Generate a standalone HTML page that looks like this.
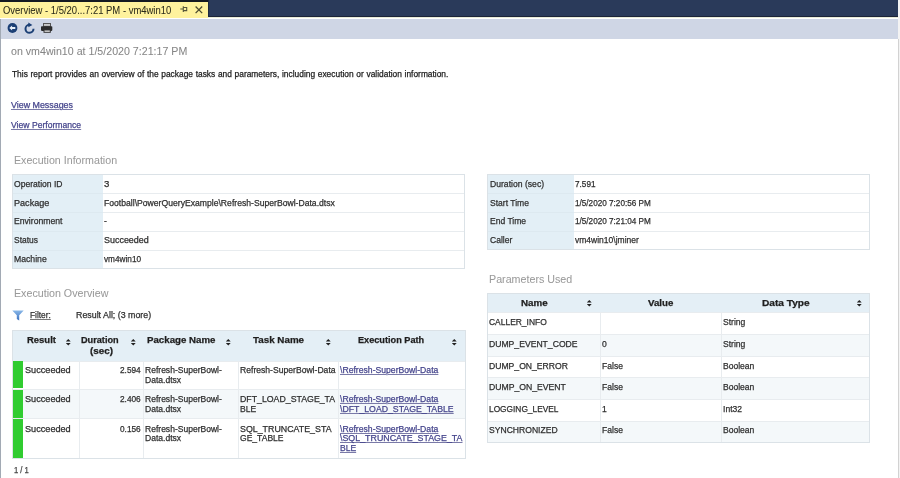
<!DOCTYPE html>
<html><head><meta charset="utf-8"><style>
html,body{margin:0;padding:0;width:900px;height:478px;overflow:hidden;background:#fff;position:relative;font-family:"Liberation Sans", sans-serif;}
#t{position:absolute;left:0;top:0;width:900px;height:478px;will-change:transform;}
#t div{position:absolute;white-space:pre;transform-origin:0 0;-webkit-text-stroke:0.25px currentColor;}
</style></head><body>
<div style="position:absolute;left:0px;top:0px;width:898px;height:16.7px;background:#2a3a5a;"></div>
<div style="position:absolute;left:207.8px;top:15.7px;width:690.2px;height:1.0px;background:#1c2438;"></div>
<div style="position:absolute;left:207.8px;top:0px;width:1.0px;height:16.7px;background:#1f2a40;"></div>
<div style="position:absolute;left:0px;top:0px;width:208px;height:1.6px;background:#151a22;"></div>
<div style="position:absolute;left:207.8px;top:16.7px;width:690.2px;height:1.8px;background:#e8ebd8;"></div>
<div style="position:absolute;left:0px;top:1.6px;width:207.8px;height:16.9px;background:#fff29d;"></div>
<div style="position:absolute;left:0px;top:18.5px;width:898px;height:20.1px;background:#cfd6e5;"></div>
<div style="position:absolute;left:0px;top:18.5px;width:1.4px;height:459.5px;background:#a2aab4;"></div>
<div style="position:absolute;left:898px;top:0px;width:2px;height:478px;background:#f3f3f3;"></div>
<div style="position:absolute;left:898px;top:38.6px;width:1px;height:439.4px;background:#d2d2d2;"></div>
<div style="position:absolute;left:12px;top:174px;width:453px;height:95px;background:#fff;box-sizing:border-box;border:1px solid #dbe2e7"></div>
<div style="position:absolute;left:13px;top:175px;width:89.5px;height:93px;background:#e3eff6;"></div>
<div style="position:absolute;left:102.5px;top:192.7px;width:361.5px;height:1.0px;background:#e8ecef;"></div>
<div style="position:absolute;left:13px;top:192.7px;width:89.5px;height:1.0px;background:#dde9f0;"></div>
<div style="position:absolute;left:102.5px;top:212px;width:361.5px;height:1px;background:#e8ecef;"></div>
<div style="position:absolute;left:13px;top:212px;width:89.5px;height:1px;background:#dde9f0;"></div>
<div style="position:absolute;left:102.5px;top:231px;width:361.5px;height:1px;background:#e8ecef;"></div>
<div style="position:absolute;left:13px;top:231px;width:89.5px;height:1px;background:#dde9f0;"></div>
<div style="position:absolute;left:102.5px;top:249.7px;width:361.5px;height:1.0px;background:#e8ecef;"></div>
<div style="position:absolute;left:13px;top:249.7px;width:89.5px;height:1.0px;background:#dde9f0;"></div>
<div style="position:absolute;left:487px;top:174px;width:383px;height:76px;background:#fff;box-sizing:border-box;border:1px solid #dbe2e7"></div>
<div style="position:absolute;left:488px;top:175px;width:85.6px;height:74px;background:#e3eff6;"></div>
<div style="position:absolute;left:573.6px;top:192.7px;width:295.4px;height:1.0px;background:#e8ecef;"></div>
<div style="position:absolute;left:488px;top:192.7px;width:85.6px;height:1.0px;background:#dde9f0;"></div>
<div style="position:absolute;left:573.6px;top:212px;width:295.4px;height:1px;background:#e8ecef;"></div>
<div style="position:absolute;left:488px;top:212px;width:85.6px;height:1px;background:#dde9f0;"></div>
<div style="position:absolute;left:573.6px;top:231px;width:295.4px;height:1px;background:#e8ecef;"></div>
<div style="position:absolute;left:488px;top:231px;width:85.6px;height:1px;background:#dde9f0;"></div>
<div style="position:absolute;left:12px;top:330.1px;width:453.5px;height:128.9px;background:#fff;box-sizing:border-box;border:1px solid #dbe2e7"></div>
<div style="position:absolute;left:13px;top:331.1px;width:451.5px;height:29.5px;background:#e4eff6;"></div>
<div style="position:absolute;left:13px;top:388.8px;width:451.5px;height:29.3px;background:#f4f8fa;"></div>
<div style="position:absolute;left:13px;top:360.6px;width:451.5px;height:1.0px;background:#e8ecef;"></div>
<div style="position:absolute;left:13px;top:388.8px;width:451.5px;height:1.0px;background:#e8ecef;"></div>
<div style="position:absolute;left:13px;top:418.1px;width:451.5px;height:1.0px;background:#e8ecef;"></div>
<div style="position:absolute;left:79px;top:360.6px;width:1px;height:97.4px;background:#e8ecef;"></div>
<div style="position:absolute;left:143.3px;top:360.6px;width:1.0px;height:97.4px;background:#e8ecef;"></div>
<div style="position:absolute;left:238.2px;top:360.6px;width:1.0px;height:97.4px;background:#e8ecef;"></div>
<div style="position:absolute;left:338.4px;top:360.6px;width:1.0px;height:97.4px;background:#e8ecef;"></div>
<div style="position:absolute;left:12.9px;top:361.1px;width:9.9px;height:27.4px;background:#30cc30;"></div>
<div style="position:absolute;left:12.9px;top:389.5px;width:9.9px;height:28.3px;background:#30cc30;"></div>
<div style="position:absolute;left:12.9px;top:418.8px;width:9.9px;height:39.2px;background:#30cc30;"></div>
<div style="position:absolute;left:487px;top:293.2px;width:383px;height:149.8px;background:#fff;box-sizing:border-box;border:1px solid #dbe2e7"></div>
<div style="position:absolute;left:488px;top:294.2px;width:381px;height:18.0px;background:#e4eff6;"></div>
<div style="position:absolute;left:488px;top:312.2px;width:381px;height:1.0px;background:#e8ecef;"></div>
<div style="position:absolute;left:488px;top:333.95px;width:381px;height:21.75px;background:#f4f8fa;"></div>
<div style="position:absolute;left:488px;top:333.95px;width:381px;height:1.0px;background:#e8ecef;"></div>
<div style="position:absolute;left:488px;top:355.7px;width:381px;height:1.0px;background:#e8ecef;"></div>
<div style="position:absolute;left:488px;top:377.45px;width:381px;height:21.75px;background:#f4f8fa;"></div>
<div style="position:absolute;left:488px;top:377.45px;width:381px;height:1.0px;background:#e8ecef;"></div>
<div style="position:absolute;left:488px;top:399.2px;width:381px;height:1.0px;background:#e8ecef;"></div>
<div style="position:absolute;left:488px;top:420.95px;width:381px;height:21.05px;background:#f4f8fa;"></div>
<div style="position:absolute;left:488px;top:420.95px;width:381px;height:1.0px;background:#e8ecef;"></div>
<div style="position:absolute;left:600.3px;top:312.2px;width:1.0px;height:129.8px;background:#e8ecef;"></div>
<div style="position:absolute;left:721.4px;top:312.2px;width:1.0px;height:129.8px;background:#e8ecef;"></div>
<svg style="position:absolute;left:66.2px;top:338.7px" width="5" height="7" viewBox="0 0 5 7"><path d="M2.3 0 L4.7 2.4 L-0.1 2.4 Z M2.3 6.5 L4.7 4.1 L-0.1 4.1 Z" fill="#222"/></svg>
<svg style="position:absolute;left:130.7px;top:338.7px" width="5" height="7" viewBox="0 0 5 7"><path d="M2.3 0 L4.7 2.4 L-0.1 2.4 Z M2.3 6.5 L4.7 4.1 L-0.1 4.1 Z" fill="#222"/></svg>
<svg style="position:absolute;left:225.9px;top:338.7px" width="5" height="7" viewBox="0 0 5 7"><path d="M2.3 0 L4.7 2.4 L-0.1 2.4 Z M2.3 6.5 L4.7 4.1 L-0.1 4.1 Z" fill="#222"/></svg>
<svg style="position:absolute;left:325.6px;top:338.7px" width="5" height="7" viewBox="0 0 5 7"><path d="M2.3 0 L4.7 2.4 L-0.1 2.4 Z M2.3 6.5 L4.7 4.1 L-0.1 4.1 Z" fill="#222"/></svg>
<svg style="position:absolute;left:451.6px;top:338.7px" width="5" height="7" viewBox="0 0 5 7"><path d="M2.3 0 L4.7 2.4 L-0.1 2.4 Z M2.3 6.5 L4.7 4.1 L-0.1 4.1 Z" fill="#222"/></svg>
<svg style="position:absolute;left:587.4px;top:299.7px" width="5" height="7" viewBox="0 0 5 7"><path d="M2.3 0 L4.7 2.4 L-0.1 2.4 Z M2.3 6.5 L4.7 4.1 L-0.1 4.1 Z" fill="#222"/></svg>
<svg style="position:absolute;left:856.5px;top:299.7px" width="5" height="7" viewBox="0 0 5 7"><path d="M2.3 0 L4.7 2.4 L-0.1 2.4 Z M2.3 6.5 L4.7 4.1 L-0.1 4.1 Z" fill="#222"/></svg>
<svg style="position:absolute;left:12px;top:309.5px" width="12" height="11" viewBox="0 0 12 11"><defs><linearGradient id="fg" x1="0" y1="0" x2="0" y2="1"><stop offset="0" stop-color="#8ab8e8"/><stop offset="1" stop-color="#3a70c0"/></linearGradient></defs><path d="M0.3 0.5 H11.7 L7.2 5.2 V10.5 L4.8 9 V5.2 Z" fill="url(#fg)"/></svg>
<svg style="position:absolute;left:0px;top:19px" width="60" height="19" viewBox="0 0 60 19">
<circle cx="12.45" cy="9" r="4.9" fill="#1b3f75"/>
<path d="M9.3 9 L12.1 6.4 V8.1 H15.3 V9.9 H12.1 V11.6 Z" fill="#e8f0fa"/>
<path d="M33.5 9.8 A4 4 0 1 1 29.3 5.8" fill="none" stroke="#1b3f75" stroke-width="2"/>
<path d="M28.3 3.6 L32.4 5.9 L28.3 8.2 Z" fill="#1b3f75"/>
<rect x="43" y="4" width="8" height="4" fill="#555"/>
<rect x="44" y="5.2" width="6" height="1.5" fill="#e6e6e6"/>
<rect x="41" y="7.3" width="11.3" height="4.6" rx="0.8" fill="#2b2b2b"/>
<rect x="43.5" y="10.5" width="7.3" height="3.3" fill="#333"/>
<rect x="44.5" y="11.5" width="5.3" height="1.3" fill="#e6e6e6"/>
</svg>
<svg style="position:absolute;left:175px;top:2px" width="32" height="14" viewBox="0 0 32 14">
<path d="M5.3 7 H8.3 M8.3 4.3 V10.1 M8.3 5.5 H11.7 V8.6 H8.3" fill="none" stroke="#55553a" stroke-width="1.1"/>
<path d="M20.6 4.5 L27.2 11.1 M27.2 4.5 L20.6 11.1" stroke="#4a4a30" stroke-width="1.3"/>
</svg>
<div id="t">
<div style="-webkit-text-stroke:0.05px;left:2.93px;top:5.12px;font-size:11px;line-height:11px;color:#2a2a1a;transform:scaleX(0.8600);">Overview - 1/5/20...7:21 PM - vm4win10</div>
<div style="-webkit-text-stroke:0.05px;left:11.03px;top:45.92px;font-size:11px;line-height:11px;color:#858585;transform:scaleX(0.9672);">on vm4win10 at 1/5/2020 7:21:17 PM</div>
<div style="left:12.37px;top:70.08px;font-size:9px;line-height:9px;word-spacing:0.4px;color:#1a1a1a;transform:scaleX(0.9309);">This report provides an overview of the package tasks and parameters, including execution or validation information.</div>
<div style="left:11.37px;top:100.88px;font-size:9px;line-height:9px;color:#45458c;transform:scaleX(0.9859);text-decoration:underline;text-decoration-color:#7a7aa8;">View Messages</div>
<div style="left:11.37px;top:121.08px;font-size:9px;line-height:9px;color:#45458c;transform:scaleX(0.9562);text-decoration:underline;text-decoration-color:#7a7aa8;">View Performance</div>
<div style="-webkit-text-stroke:0.05px;left:13.93px;top:154.72px;font-size:11px;line-height:11px;color:#9a9a9a;transform:scaleX(0.9687);">Execution Information</div>
<div style="-webkit-text-stroke:0.05px;left:489.23px;top:274.22px;font-size:11px;line-height:11px;color:#9a9a9a;transform:scaleX(0.9729);">Parameters Used</div>
<div style="-webkit-text-stroke:0.05px;left:13.93px;top:287.62px;font-size:11px;line-height:11px;color:#9a9a9a;transform:scaleX(0.9707);">Execution Overview</div>
<div style="left:13.77px;top:179.68px;font-size:9px;line-height:9px;color:#2e2e2e;transform:scaleX(0.9515);">Operation ID</div>
<div style="left:103.97px;top:179.68px;font-size:9px;line-height:9px;color:#2e2e2e;transform:scaleX(1.0691);">3</div>
<div style="left:13.77px;top:198.78px;font-size:9px;line-height:9px;color:#2e2e2e;transform:scaleX(1.0079);">Package</div>
<div style="left:103.97px;top:198.78px;font-size:9px;line-height:9px;color:#2e2e2e;transform:scaleX(0.9575);">Football\PowerQueryExample\Refresh-SuperBowl-Data.dtsx</div>
<div style="left:13.77px;top:217.38px;font-size:9px;line-height:9px;color:#2e2e2e;transform:scaleX(0.9591);">Environment</div>
<div style="left:103.97px;top:217.38px;font-size:9px;line-height:9px;color:#2e2e2e;transform:scaleX(0.9500);">-</div>
<div style="left:13.77px;top:236.28px;font-size:9px;line-height:9px;color:#2e2e2e;transform:scaleX(0.9384);">Status</div>
<div style="left:103.97px;top:236.28px;font-size:9px;line-height:9px;color:#2e2e2e;transform:scaleX(0.9944);">Succeeded</div>
<div style="left:13.77px;top:254.58px;font-size:9px;line-height:9px;color:#2e2e2e;transform:scaleX(0.9628);">Machine</div>
<div style="left:103.97px;top:254.58px;font-size:9px;line-height:9px;color:#2e2e2e;transform:scaleX(0.9159);">vm4win10</div>
<div style="left:489.57px;top:179.68px;font-size:9px;line-height:9px;color:#2e2e2e;transform:scaleX(0.9563);">Duration (sec)</div>
<div style="left:574.67px;top:179.68px;font-size:9px;line-height:9px;color:#2e2e2e;transform:scaleX(0.9100);">7.591</div>
<div style="left:489.57px;top:198.78px;font-size:9px;line-height:9px;color:#2e2e2e;transform:scaleX(0.9500);">Start Time</div>
<div style="left:574.67px;top:198.78px;font-size:9px;line-height:9px;color:#2e2e2e;transform:scaleX(0.9073);">1/5/2020 7:20:56 PM</div>
<div style="left:489.57px;top:217.38px;font-size:9px;line-height:9px;color:#2e2e2e;transform:scaleX(0.9500);">End Time</div>
<div style="left:574.67px;top:217.38px;font-size:9px;line-height:9px;color:#2e2e2e;transform:scaleX(0.9073);">1/5/2020 7:21:04 PM</div>
<div style="left:489.57px;top:236.28px;font-size:9px;line-height:9px;color:#2e2e2e;transform:scaleX(0.9500);">Caller</div>
<div style="left:574.67px;top:236.28px;font-size:9px;line-height:9px;color:#2e2e2e;transform:scaleX(0.9455);">vm4win10\jminer</div>
<div style="left:30.37px;top:311.18px;font-size:9px;line-height:9px;color:#333;transform:scaleX(0.9259);text-decoration:underline;text-decoration-color:#777;">Filter:</div>
<div style="left:76.07px;top:311.18px;font-size:9px;line-height:9px;color:#2e2e2e;transform:scaleX(0.9824);">Result All; (3 more)</div>
<div style="left:26.67px;top:336.08px;font-size:9px;line-height:9px;font-weight:700;color:#1e1e1e;transform:scaleX(1.0520);">Result</div>
<div style="left:80.67px;top:336.08px;font-size:9px;line-height:9px;font-weight:700;color:#1e1e1e;transform:scaleX(1.0166);">Duration</div>
<div style="left:90.07px;top:346.68px;font-size:9px;line-height:9px;font-weight:700;color:#1e1e1e;transform:scaleX(1.0937);">(sec)</div>
<div style="left:146.87px;top:336.08px;font-size:9px;line-height:9px;font-weight:700;color:#1e1e1e;transform:scaleX(1.0775);">Package Name</div>
<div style="left:252.67px;top:336.08px;font-size:9px;line-height:9px;font-weight:700;color:#1e1e1e;transform:scaleX(1.0901);">Task Name</div>
<div style="left:358.17px;top:336.08px;font-size:9px;line-height:9px;font-weight:700;color:#1e1e1e;transform:scaleX(1.0169);">Execution Path</div>
<div style="left:25.17px;top:365.98px;font-size:9px;line-height:9px;color:#2e2e2e;transform:scaleX(1.0148);">Succeeded</div>
<div style="left:119.57px;top:365.98px;font-size:9px;line-height:9px;color:#2e2e2e;transform:scaleX(0.9200);">2.594</div>
<div style="left:144.67px;top:365.98px;font-size:9px;line-height:9px;color:#2e2e2e;transform:scaleX(0.9484);">Refresh-SuperBowl-</div>
<div style="left:144.67px;top:375.78px;font-size:9px;line-height:9px;color:#2e2e2e;transform:scaleX(0.9500);">Data.dtsx</div>
<div style="left:239.67px;top:365.98px;font-size:9px;line-height:9px;color:#2e2e2e;transform:scaleX(0.9551);">Refresh-SuperBowl-Data</div>
<div style="left:340.17px;top:365.98px;font-size:9px;line-height:9px;color:#45458c;transform:scaleX(0.9592);text-decoration:underline;text-decoration-color:#7a7aa8;">\Refresh-SuperBowl-Data</div>
<div style="left:25.17px;top:395.28px;font-size:9px;line-height:9px;color:#2e2e2e;transform:scaleX(1.0148);">Succeeded</div>
<div style="left:119.57px;top:395.28px;font-size:9px;line-height:9px;color:#2e2e2e;transform:scaleX(0.9200);">2.406</div>
<div style="left:144.67px;top:395.28px;font-size:9px;line-height:9px;color:#2e2e2e;transform:scaleX(0.9484);">Refresh-SuperBowl-</div>
<div style="left:144.67px;top:405.08px;font-size:9px;line-height:9px;color:#2e2e2e;transform:scaleX(0.9500);">Data.dtsx</div>
<div style="left:239.67px;top:395.28px;font-size:9px;line-height:9px;color:#2e2e2e;transform:scaleX(0.9741);">DFT_LOAD_STAGE_TA</div>
<div style="left:239.67px;top:405.08px;font-size:9px;line-height:9px;color:#2e2e2e;transform:scaleX(0.9500);">BLE</div>
<div style="left:340.17px;top:395.28px;font-size:9px;line-height:9px;color:#45458c;transform:scaleX(0.9592);text-decoration:underline;text-decoration-color:#7a7aa8;">\Refresh-SuperBowl-Data</div>
<div style="left:340.17px;top:404.98px;font-size:9px;line-height:9px;color:#45458c;transform:scaleX(0.9699);text-decoration:underline;text-decoration-color:#7a7aa8;">\DFT_LOAD_STAGE_TABLE</div>
<div style="left:25.17px;top:424.58px;font-size:9px;line-height:9px;color:#2e2e2e;transform:scaleX(1.0148);">Succeeded</div>
<div style="left:119.57px;top:424.58px;font-size:9px;line-height:9px;color:#2e2e2e;transform:scaleX(0.9200);">0.156</div>
<div style="left:144.67px;top:424.58px;font-size:9px;line-height:9px;color:#2e2e2e;transform:scaleX(0.9484);">Refresh-SuperBowl-</div>
<div style="left:144.67px;top:434.38px;font-size:9px;line-height:9px;color:#2e2e2e;transform:scaleX(0.9500);">Data.dtsx</div>
<div style="left:239.67px;top:424.58px;font-size:9px;line-height:9px;color:#2e2e2e;transform:scaleX(0.9828);">SQL_TRUNCATE_STA</div>
<div style="left:239.67px;top:434.38px;font-size:9px;line-height:9px;color:#2e2e2e;transform:scaleX(0.9500);">GE_TABLE</div>
<div style="left:340.17px;top:424.58px;font-size:9px;line-height:9px;color:#45458c;transform:scaleX(0.9592);text-decoration:underline;text-decoration-color:#7a7aa8;">\Refresh-SuperBowl-Data</div>
<div style="left:340.17px;top:434.28px;font-size:9px;line-height:9px;color:#45458c;transform:scaleX(0.9836);text-decoration:underline;text-decoration-color:#7a7aa8;">\SQL_TRUNCATE_STAGE_TA</div>
<div style="left:340.17px;top:443.98px;font-size:9px;line-height:9px;color:#45458c;transform:scaleX(0.9500);text-decoration:underline;text-decoration-color:#7a7aa8;">BLE</div>
<div style="left:520.66px;top:298.98px;font-size:9px;line-height:9px;font-weight:700;color:#1e1e1e;transform:scaleX(1.0883);">Name</div>
<div style="left:647.57px;top:298.98px;font-size:9px;line-height:9px;font-weight:700;color:#1e1e1e;transform:scaleX(1.0745);">Value</div>
<div style="left:761.84px;top:298.98px;font-size:9px;line-height:9px;font-weight:700;color:#1e1e1e;transform:scaleX(1.1264);">Data Type</div>
<div style="left:489.47px;top:317.58px;font-size:9px;line-height:9px;color:#2e2e2e;transform:scaleX(0.9385);">CALLER_INFO</div>
<div style="left:723.37px;top:317.58px;font-size:9px;line-height:9px;color:#2e2e2e;transform:scaleX(0.9500);">String</div>
<div style="left:489.47px;top:339.98px;font-size:9px;line-height:9px;color:#2e2e2e;transform:scaleX(0.9571);">DUMP_EVENT_CODE</div>
<div style="left:601.77px;top:339.98px;font-size:9px;line-height:9px;color:#2e2e2e;transform:scaleX(0.9500);">0</div>
<div style="left:723.37px;top:339.98px;font-size:9px;line-height:9px;color:#2e2e2e;transform:scaleX(0.9500);">String</div>
<div style="left:489.47px;top:361.78px;font-size:9px;line-height:9px;color:#2e2e2e;transform:scaleX(0.9569);">DUMP_ON_ERROR</div>
<div style="left:601.77px;top:361.78px;font-size:9px;line-height:9px;color:#2e2e2e;transform:scaleX(0.9500);">False</div>
<div style="left:723.37px;top:361.78px;font-size:9px;line-height:9px;color:#2e2e2e;transform:scaleX(0.9500);">Boolean</div>
<div style="left:489.47px;top:382.88px;font-size:9px;line-height:9px;color:#2e2e2e;transform:scaleX(0.9606);">DUMP_ON_EVENT</div>
<div style="left:601.77px;top:382.88px;font-size:9px;line-height:9px;color:#2e2e2e;transform:scaleX(0.9500);">False</div>
<div style="left:723.37px;top:382.88px;font-size:9px;line-height:9px;color:#2e2e2e;transform:scaleX(0.9500);">Boolean</div>
<div style="left:489.47px;top:404.98px;font-size:9px;line-height:9px;color:#2e2e2e;transform:scaleX(0.9252);">LOGGING_LEVEL</div>
<div style="left:601.77px;top:404.98px;font-size:9px;line-height:9px;color:#2e2e2e;transform:scaleX(0.9500);">1</div>
<div style="left:723.37px;top:404.98px;font-size:9px;line-height:9px;color:#2e2e2e;transform:scaleX(0.9500);">Int32</div>
<div style="left:489.47px;top:426.48px;font-size:9px;line-height:9px;color:#2e2e2e;transform:scaleX(0.9534);">SYNCHRONIZED</div>
<div style="left:601.77px;top:426.48px;font-size:9px;line-height:9px;color:#2e2e2e;transform:scaleX(0.9500);">False</div>
<div style="left:723.37px;top:426.48px;font-size:9px;line-height:9px;color:#2e2e2e;transform:scaleX(0.9500);">Boolean</div>
<div style="left:13.57px;top:465.78px;font-size:9px;line-height:9px;color:#444;transform:scaleX(0.8486);">1 / 1</div>
</div>
</body></html>
